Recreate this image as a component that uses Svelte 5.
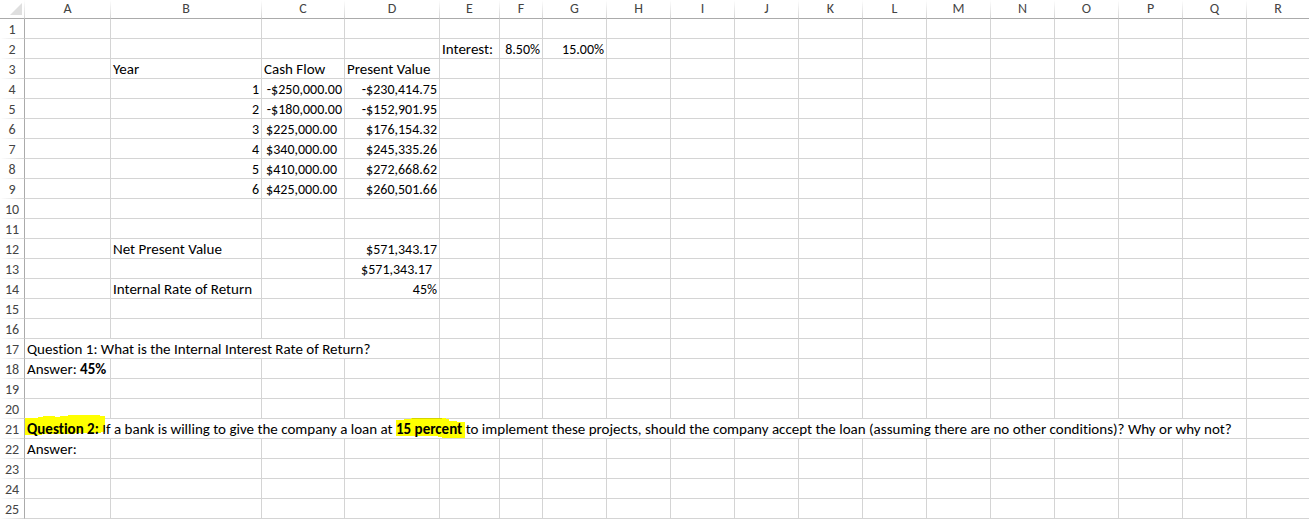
<script lang="ts">
  type Part = { text: string; bold?: boolean; mark?: "wide" | "narrow" };
  type Cell = { parts: Part[]; align?: "right" | "accounting"; span?: number };

  const columns = [
    { name: "A", width: 86 },
    { name: "B", width: 151 },
    { name: "C", width: 83 },
    { name: "D", width: 95 },
    { name: "E", width: 60 },
    { name: "F", width: 43 },
    ..."GHIJKLMNOPQ".split("").map((name) => ({ name, width: 64 })),
    { name: "R", width: 0 }, // takes whatever is left of the window
  ];
  const rowCount = 25;

  const left = (text: string, span = 1): Cell => ({ parts: [{ text }], span });
  const right = (text: string): Cell => ({ parts: [{ text }], align: "right" });
  const accounting = (text: string): Cell => ({ parts: [{ text }], align: "accounting" });

  const cells: Record<string, Cell> = {
    E2: left("Interest:"),
    F2: right("8.50%"),
    G2: right("15.00%"),
    B3: left("Year"),
    C3: left("Cash Flow"),
    D3: left("Present Value"),
    B4: right("1"),
    C4: right("-$250,000.00"),
    D4: right("-$230,414.75"),
    B5: right("2"),
    C5: right("-$180,000.00"),
    D5: right("-$152,901.95"),
    B6: right("3"),
    C6: accounting("$225,000.00"),
    D6: right("$176,154.32"),
    B7: right("4"),
    C7: accounting("$340,000.00"),
    D7: right("$245,335.26"),
    B8: right("5"),
    C8: accounting("$410,000.00"),
    D8: right("$272,668.62"),
    B9: right("6"),
    C9: accounting("$425,000.00"),
    D9: right("$260,501.66"),
    B12: left("Net Present Value"),
    D12: right("$571,343.17"),
    D13: accounting("$571,343.17"),
    B14: left("Internal Rate of Return"),
    D14: right("45%"),
    A17: left("Question 1: What is the Internal Interest Rate of Return?", 4),
    A18: { parts: [{ text: "Answer: " }, { text: "45%", bold: true }] },
    A21: {
      parts: [
        { text: "Question 2:", bold: true, mark: "wide" },
        { text: " If a bank is willing to give the company a loan at " },
        { text: "15 percent", bold: true, mark: "narrow" },
        {
          text: " to implement these projects, should the company accept the loan (assuming there are no other conditions)? Why or why not?",
        },
      ],
      span: 17,
    },
    A22: left("Answer:"),
  };

  // Long text runs over its empty neighbours, so those cells are left out.
  function rowCells(row: number) {
    const out: { id: string; cell?: Cell }[] = [];
    for (let i = 0; i < columns.length; ) {
      const id = columns[i].name + row;
      const cell = cells[id];
      out.push({ id, cell });
      i += cell?.span ?? 1;
    }
    return out;
  }

  const rows = Array.from({ length: rowCount }, (_, i) => ({ n: i + 1, cells: rowCells(i + 1) }));
</script>

<main class="sheet">
  <table>
    <colgroup>
      <col class="gutter" />
      {#each columns as c (c.name)}
        <col style:width={c.width ? `${c.width}px` : "auto"} />
      {/each}
    </colgroup>
    <thead>
      <tr>
        <td class="corner">
          <svg width="12" height="12" viewBox="0 0 12 12" aria-hidden="true">
            <path d="M12 0V12H0Z" fill="#dfdfdf" />
          </svg>
        </td>
        {#each columns as c (c.name)}
          <th scope="col">{c.name}</th>
        {/each}
      </tr>
    </thead>
    <tbody>
      {#each rows as row (row.n)}
        <tr>
          <th scope="row">{row.n}</th>
          {#each row.cells as { id, cell } (id)}
            <td
              class={cell?.align}
              class:highlighted={cell?.parts.some((p) => p.mark)}
              colspan={cell?.span ?? 1}
            >
              {#if cell}
                {#each cell.parts as p}<span class:bold={p.bold} class:marked={p.mark}
                    >{#if p.mark === "wide"}<svg class="ink wide" width="80" height="20" viewBox="0 0 80 20" aria-hidden="true"
                        ><path d="M0 3H13V2H18V1H30V2H35V1H43V0H75V1H80V17H76V18H50V19H17V20H0Z" /></svg
                      >{:else if p.mark === "narrow"}<svg class="ink" width="69" height="23" viewBox="0 0 69 23" aria-hidden="true"
                        ><path d="M0 5H8V4H15V3H50V4H53V6H61V7H69V23H46V22H42V21H0Z" /><path class="rule" d="M16 3H46V4H16Z" /></svg
                      >{/if}{p.text}</span
                  >{/each}
              {/if}
            </td>
          {/each}
        </tr>
      {/each}
    </tbody>
  </table>
</main>

<style>
  :global(body) {
    margin: 0;
    background: #fff;
  }
  .sheet {
    overflow: hidden;
    font-family: Calibri, Carlito, Lato, sans-serif;
    font-size: 15px;
    font-variant-ligatures: none;
    line-height: 17px;
    color: #000;
  }
  table {
    width: 100%;
    table-layout: fixed;
    border-collapse: separate;
    border-spacing: 0;
  }
  .gutter {
    width: 25px;
  }
  th,
  td {
    box-sizing: border-box;
    height: 20px;
    padding: 2px 2px 0;
    border-right: 1px solid #d4d4d4;
    border-bottom: 1px solid #d4d4d4;
    white-space: pre;
    text-align: left;
  }
  th {
    font-size: 14px;
    font-weight: 400;
    color: #444;
    text-align: center;
  }
  thead th,
  .corner {
    height: 19px;
    padding-top: 0;
    line-height: 18px;
    border-bottom-color: #ababab;
    border-right-color: transparent;
    background: linear-gradient(#fff, #d4d4d4) right / 1px 100% no-repeat border-box;
  }
  tbody th {
    padding: 2px 0 0;
    border-right-color: #ababab;
    border-bottom-color: transparent;
    background: linear-gradient(to right, #fff, #d4d4d4) bottom / 100% 1px no-repeat border-box;
  }
  tr > :last-child {
    border-right: 0;
  }
  thead th:last-child {
    background: none;
  }
  .corner svg {
    display: block;
    margin: 0 0 0 auto;
  }
  .right,
  .accounting {
    font-size: 14px;
    text-align: right;
  }
  .accounting {
    padding-right: 7px;
  }
  .bold {
    font-weight: 700;
  }
  /* keeps the ink under the text but over the grid lines */
  .highlighted {
    position: relative;
    z-index: 0;
  }
  .marked {
    position: relative;
  }
  .ink {
    position: absolute;
    z-index: -1;
    top: -5px;
    left: 0;
    fill: #ff0;
  }
  .ink.wide {
    left: -2px;
  }
  .rule {
    fill: #d4d400;
  }
</style>
